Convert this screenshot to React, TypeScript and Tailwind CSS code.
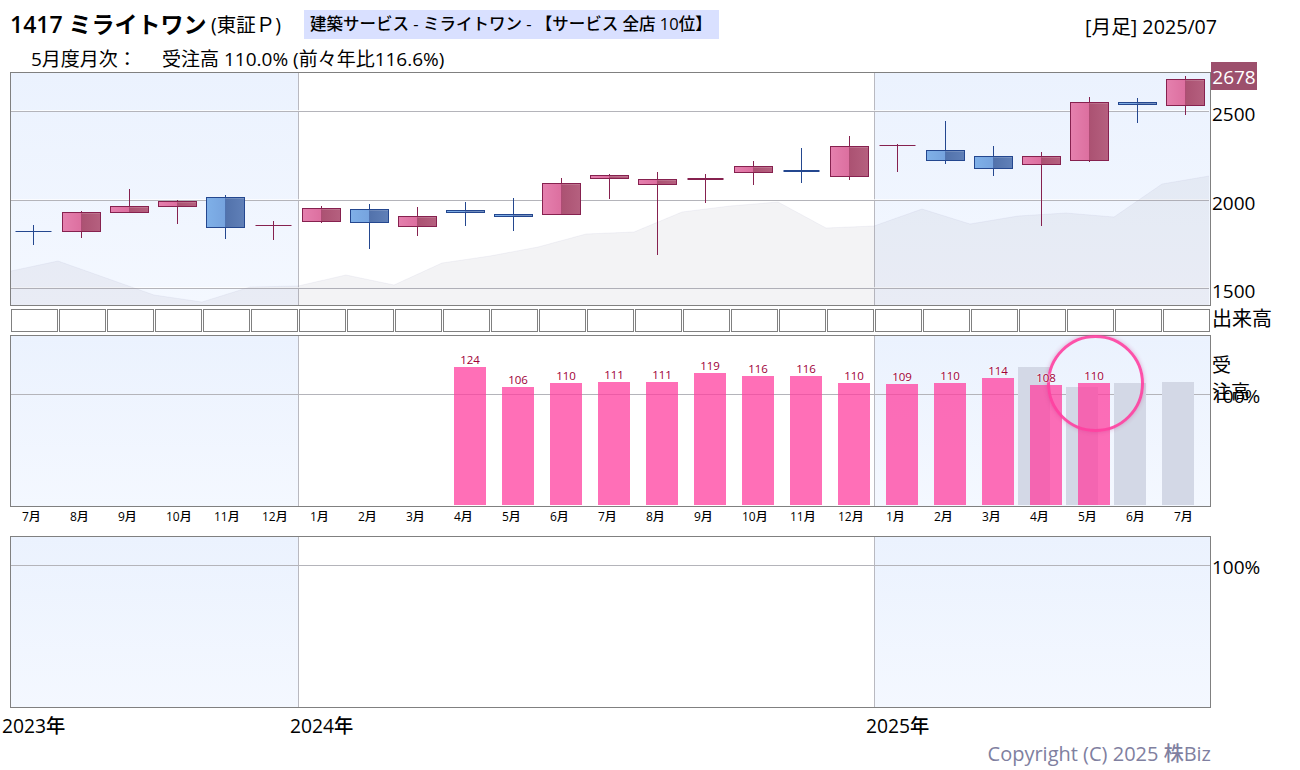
import React from "react";

const FONT = "[font-family:'Open_Sans','Noto_Sans_CJK_JP',sans-serif]";

type C = { t: number; b: number; h: number; l: number; up: boolean; thick?: number };
const candles: C[] = [
  { t: 231, b: 231, h: 225, l: 245, up: false },
  { t: 212, b: 232, h: 211, l: 238, up: true },
  { t: 206, b: 213, h: 189, l: 213, up: true },
  { t: 201, b: 207, h: 200, l: 224, up: true },
  { t: 197, b: 228, h: 195, l: 239, up: false },
  { t: 225, b: 225, h: 221, l: 240, up: true },
  { t: 208, b: 222, h: 206, l: 223, up: true },
  { t: 209, b: 223, h: 204, l: 249, up: false },
  { t: 216, b: 227, h: 207, l: 236, up: true },
  { t: 210, b: 213, h: 202, l: 226, up: false },
  { t: 214, b: 217, h: 198, l: 231, up: false },
  { t: 183, b: 215, h: 178, l: 215, up: true },
  { t: 175, b: 179, h: 174, l: 199, up: true },
  { t: 179, b: 185, h: 172, l: 255, up: true },
  { t: 178, b: 178, h: 174, l: 203, up: true, thick: 2 },
  { t: 166, b: 173, h: 161, l: 185, up: true },
  { t: 170, b: 170, h: 148, l: 183, up: false, thick: 2 },
  { t: 146, b: 177, h: 136, l: 180, up: true },
  { t: 145, b: 145, h: 144, l: 172, up: true },
  { t: 150, b: 161, h: 121, l: 164, up: false },
  { t: 156, b: 169, h: 146, l: 176, up: false },
  { t: 156, b: 165, h: 152, l: 226, up: true },
  { t: 102, b: 161, h: 97, l: 162, up: true },
  { t: 102, b: 105, h: 98, l: 123, up: false },
  { t: 79, b: 106, h: 76, l: 115, up: true },
];

const area: [number, number][] = [
  [11, 271], [58, 261], [154, 295], [202, 302], [250, 287], [298, 286], [346, 275], [394, 285],
  [442, 263], [490, 256], [538, 247], [586, 234], [634, 232], [682, 212], [730, 206], [778, 202],
  [826, 228], [874, 226], [922, 209], [970, 224], [1018, 216], [1066, 213], [1114, 217], [1162, 184], [1209, 176],
];

const months = ["7月","8月","9月","10月","11月","12月","1月","2月","3月","4月","5月","6月","7月","8月","9月","10月","11月","12月","1月","2月","3月","4月","5月","6月","7月"];
const pink = [124,106,110,111,111,119,116,116,110,109,110,114,108,110];
const pinkH = [138,118,122,123,123,132,129,129,122,121,122,127,120,122];
const grayH = [138,118,122,123];

function Bands() {
  return (
    <div className="absolute inset-0 flex">
      <div className="w-[287px] bg-gradient-to-b from-[#ebf2fe] to-[#f4f8ff]" />
      <div className="flex-1 border-l border-[#b9b9c0] bg-white" />
      <div className="w-[336px] border-l border-[#b9b9c0] bg-gradient-to-b from-[#ebf2fe] to-[#f4f8ff]" />
    </div>
  );
}

function Candles() {
  return (
    <svg className="absolute left-[-11px] top-[-73px]" width={1222} height={306}>
      <defs>
        <linearGradient id="pl" x1="0" x2="1" y1="0" y2="0">
          <stop offset="0" stopColor="#e580ae" />
          <stop offset="1" stopColor="#dc6f9f" />
        </linearGradient>
        <linearGradient id="pr" x1="0" x2="1" y1="0" y2="0">
          <stop offset="0" stopColor="#ab5272" />
          <stop offset="1" stopColor="#b5607f" />
        </linearGradient>
        <linearGradient id="bl" x1="0" x2="1" y1="0" y2="0">
          <stop offset="0" stopColor="#7fb0e8" />
          <stop offset="1" stopColor="#76a3de" />
        </linearGradient>
        <linearGradient id="br" x1="0" x2="1" y1="0" y2="0">
          <stop offset="0" stopColor="#5272ab" />
          <stop offset="1" stopColor="#6080b8" />
        </linearGradient>
      </defs>
      {[111, 200, 288].map((y) => (
        <g key={y}>
          <line x1="11" x2="1209" y1={y - 0.5} y2={y - 0.5} stroke="#fff" strokeOpacity="0.7" />
          <line x1="11" x2="1209" y1={y + 0.5} y2={y + 0.5} stroke="#b4b4ba" />
        </g>
      ))}
      <polygon
        points={`11,305 ${area.map((p) => p.join(",")).join(" ")} 1209,305`}
        fill="#8a8a9e"
        fillOpacity="0.1"
      />
      <polyline points={area.map((p) => p.join(",")).join(" ")} fill="none" stroke="#8f96b8" strokeOpacity="0.1" />
      {candles.map((c, i) => {
        const cx = 33 + 48 * i + 0.5;
        const stroke = c.up ? "#86214f" : "#24478f";
        const doji = c.t === c.b;
        const y0 = c.t + 0.5;
        const y1 = c.b - 0.5;
        return (
          <g key={i}>
            <line x1={cx} x2={cx} y1={c.h} y2={c.l} stroke={stroke} />
            {doji ? (
              <line
                x1={cx - 18}
                x2={cx + 18}
                y1={c.thick ? c.t + 1 : c.t + 0.5}
                y2={c.thick ? c.t + 1 : c.t + 0.5}
                stroke={stroke}
                strokeWidth={c.thick ?? 1}
              />
            ) : (
              <>
                <rect x={cx - 19} y={y0} width={19} height={y1 - y0} fill={c.up ? "url(#pl)" : "url(#bl)"} />
                <rect x={cx} y={y0} width={19} height={y1 - y0} fill={c.up ? "url(#pr)" : "url(#br)"} />
                <rect x={cx} y={y0 + 0.5} width={19} height={Math.min(1, y1 - y0)} fill="#fff" fillOpacity="0.15" />
                <rect x={cx - 19} y={y0} width={38} height={y1 - y0} fill="none" stroke={stroke} />
              </>
            )}
          </g>
        );
      })}
    </svg>
  );
}

function GridLine({ top }: { top: string }) {
  return <div className={`absolute inset-x-0 h-px bg-[#b4b4ba] ${top}`} />;
}

export default function App() {
  return (
    <div className={`w-[1300px] h-[770px] bg-white text-black overflow-hidden relative ${FONT}`}>
      <div className="flex items-center h-[36px] pt-[12px] pl-[10px]">
        <span className="text-[23px] font-semibold w-[201px] whitespace-nowrap leading-none">1417 ミライトワン</span>
        <span className="text-[19.5px] w-[93px] whitespace-nowrap mt-[2px]">(東証Ｐ)</span>
        <span className="text-[16.5px] font-medium h-[29px] w-[415px] pl-[6px] bg-[#d9e0ff] flex items-center whitespace-nowrap">建築サービス - ミライトワン - 【サービス 全店 10位】</span>
        <span className="text-[19.7px] ml-[366px] mt-[6px] whitespace-nowrap">[月足] 2025/07</span>
      </div>
      <div className="flex items-center h-[37px] mt-[-1px] pt-[11px] pl-[31px] text-[19px] whitespace-nowrap">
        <span className="w-[131px]">5月度月次：</span>
        <span>受注高 110.0% (前々年比116.6%)</span>
      </div>

      <div className="flex ml-[10px] h-[234px]">
        <div className="relative w-[1201px] h-full border border-[#808080]">
          <Bands />
          <Candles />
        </div>
        <div className="flex flex-col text-[19px] leading-[24px]">
          <div className="mt-[-10px] w-[46px] h-[28px] pt-[2px] bg-[#9c4f6c] text-white flex items-center justify-center">2678</div>
          <div className="mt-[12px] pl-px">2500</div>
          <div className="mt-[65px] pl-px">2000</div>
          <div className="mt-[64px] pl-px">1500</div>
        </div>
      </div>

      <div className="flex ml-[11px] mt-[3px] h-[23px] gap-px items-stretch">
        {months.map((_, i) => (
          <div key={i} className="w-[47px] h-full border border-[#808080] bg-white" />
        ))}
        <div className="text-[20px] leading-[24px] pl-[1px] mt-[-2px] whitespace-nowrap">出来高</div>
      </div>

      <div className="flex ml-[10px] mt-[3px] h-[172px]">
        <div className="relative w-[1201px] h-full border border-[#808080]">
          <Bands />
          <GridLine top="top-[58px]" />
          <div className="absolute inset-0 flex items-end pl-[1007px] pb-px">
            {grayH.map((h, i) => (
              <div key={i} className="w-[48px] shrink-0">
                <div className="w-[32px] bg-[#d3d8e6]" style={{ height: h }} />
              </div>
            ))}
          </div>
          <div className="absolute inset-0 flex items-end pl-[432px] pb-px">
            {pink.map((v, i) => (
              <div key={i} className="w-[48px] shrink-0 pl-[11px]">
                <div className="relative z-10 w-[32px] text-center text-[11.5px] leading-[15px] text-[#a00038] [text-shadow:0_0_2px_#fff,0_0_2px_#fff]">{v}</div>
                <div className="w-[32px] bg-[#ff3f9f]/75" style={{ height: pinkH[i] }} />
              </div>
            ))}
          </div>
        </div>
        <div className="text-[19px] leading-[27px] pl-px pt-[17px] relative w-[48px]">
          <div>受</div>
          <div className="whitespace-nowrap">注高</div>
          <div className="mt-[-23px] whitespace-nowrap">100%</div>
        </div>
      </div>

      <div className="flex pl-[22px] h-[29px] pt-[1px] items-start text-[12px] font-medium">
        {months.map((m, i) => (
          <div key={i} className="w-[48px] shrink-0">{m}</div>
        ))}
      </div>

      <div className="flex ml-[10px] h-[172px]">
        <div className="relative w-[1201px] h-full border border-[#808080]">
          <Bands />
          <GridLine top="top-[28px]" />
        </div>
        <div className="text-[19px] leading-[24px] pl-px pt-[19px]">100%</div>
      </div>

      <div className="flex pl-[2px] h-[36px] items-center text-[19.3px] font-medium">
        <div className="w-[288px]">2023年</div>
        <div className="w-[576px]">2024年</div>
        <div>2025年</div>
      </div>
      <div className="text-right w-[1211px] mt-[-2px] text-[20px] font-medium text-[#8080a0] leading-[24px]">Copyright (C) 2025 株Biz</div>

      <div className="absolute left-[1047px] top-[335px] w-[97px] h-[97px] rounded-full border-[3px] border-[#ff40a0] opacity-90 shadow-[0_0_4px_rgba(200,60,140,0.45)]" />
    </div>
  );
}
